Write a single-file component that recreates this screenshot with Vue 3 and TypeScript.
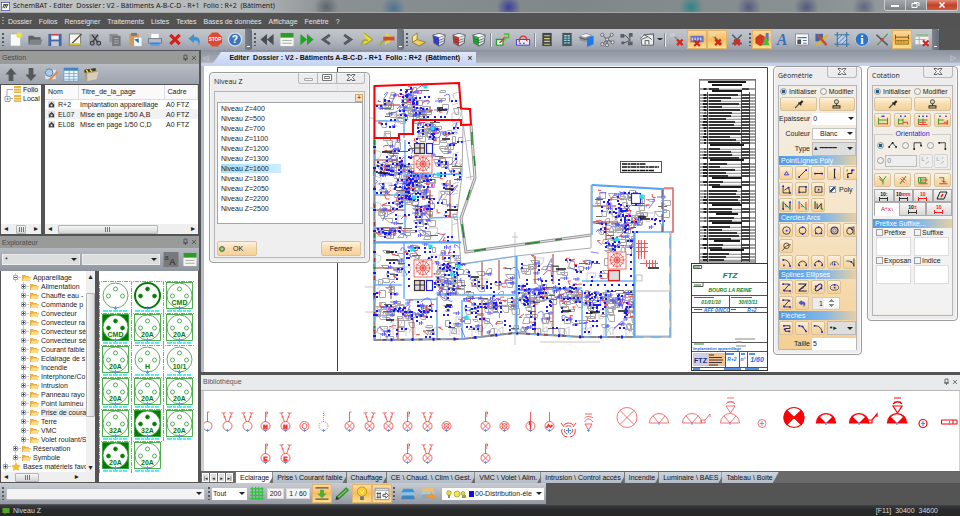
<script setup lang="ts">
import { ref } from 'vue'

type Tool = { icon: string; label: string; on?: boolean }
const P = (d: string, stroke = '#222', w = 1, fill = 'none') =>
  `<path d="${d}" stroke="${stroke}" stroke-width="${w}" fill="${fill}"/>`
const F = (d: string, fill: string) => `<path d="${d}" fill="${fill}"/>`
const C = (x: number, y: number, r: number, fill: string, stroke = 'none', w = 1) =>
  `<circle cx="${x}" cy="${y}" r="${r}" fill="${fill}" stroke="${stroke}" stroke-width="${w}"/>`
const cross = (x: number, y: number, s = 3) =>
  P(`M${x - s} ${y - s}L${x + s} ${y + s}M${x + s} ${y - s}L${x - s} ${y + s}`, '#d8241c', 2.4)
const dots = (pts: number[][], c = '#2020e8') =>
  pts.map(([x, y]) => `<rect x="${x - 1}" y="${y - 1}" width="2.4" height="2.4" fill="${c}"/>`).join('')
const cube = (a: string) =>
  F('M1 3L8 1L15 3L14 12L8 15.500L2 12Z', '#555b66') +
  F('M2 4L8 6V14.500L3 11.500Z', a) + F('M8 6L14 4L13 11.500L8 14.500Z', '#e8eaf2') +
  F('M2 3.500L8 1.800L14 3.500L8 5.500Z', '#f8f8f8') + P('M3 7L8 9L13 7M3 9.500L8 11.500L13 9.500', '#333', 0.7)

const icons: Record<string, string> = {
  app: '<rect x="0.500" y="0.500" width="15" height="15" fill="#fff" stroke="#3a40b8" stroke-width="1.500"/>' + P('M3 11L6 4M6 11L9 4M9 11L12 4M4 5H13', '#222', 1.5),
  neuf: F('M3 2H11L14 5V15H3Z', '#f8f9fa') + P('M3 2H11L14 5V15H3Z', '#a8adb4', 0.8) + C(12.5, 3.5, 3, '#f2e233'),
  ouvrir: F('M1 4H6L7.500 5.500H14V13H1Z', '#5c5f63') + F('M3 8H16L14 13.500H1Z', '#808387'),
  sauver: F('M1 2H15V15H1Z', '#4668a8') + F('M4 2H12V8H4Z', '#eef1f6') + F('M4 10H12V15H4Z', '#c5cad2') + P('M4 3H12', '#b33', 1.5),
  editer: F('M2 2H14V14H2Z', '#f5f5ee') + P('M2 2H14V14H2Z', '#777') + P('M5 12L15 2', '#5a4a3a', 1.4) + P('M2.500 13H14', '#d8c437', 2),
  couper: F('M2 2H12V14H2Z', '#9b9ea3') + P('M5 3L11 11M11 3L6 10', '#3c3d40', 1.5) + C(5, 12, 2, 'none', '#3c3d40', 1.3) + C(12, 12, 2, 'none', '#3c3d40', 1.3),
  copier: F('M2 2H11V11H2Z', '#8e9196') + F('M5 4H14V15H5Z', '#75787d') + P('M7 7H12M7 9.500H12M7 12H12', '#b5b8bc', 0.8),
  coller: F('M2 2H12V15H2Z', '#d09a5c') + F('M4 1H10V4H4Z', '#777') + F('M7 6H15V15H7Z', '#f4f7fb') + F('M7 8L12 12V7Z', '#2a6fc8'),
  imprimer: F('M4 2H12V8H4Z', '#fff') + F('M1 7H15V12H1Z', '#b6bcc6') + F('M3 11H13V15H3Z', '#5a9fe8') + P('M1 7H15V12H1Z', '#5d6775', 0.8),
  suppr: P('M3 3L13 13M13 3L3 13', '#d8201a', 3.4),
  annuler: F('M1 7L7 2V5C12 5 15 8 12 15C12 10 10 9 7 9V12Z', '#3e93cf'),
  stop: F('M5 0.500H11L15.500 5V11L11 15.500H5L0.500 11V5Z', '#e0492c') + '<text x="8" y="10" font-size="5" font-weight="bold" fill="#fff" text-anchor="middle" font-family="Liberation Sans">STOP</text>',
  aide: C(8, 8, 7, '#3f73bb', '#dce6f4', 1.2) + '<text x="8" y="12" font-size="11" font-weight="bold" fill="#fff" text-anchor="middle" font-family="Liberation Sans">?</text>',
  debut: F('M8 2V14L1 8ZM15 2V14L8 8Z', '#4a4d52'),
  liste: F('M1 2H15V15H1Z', '#f4f6f2') + F('M1 1H15V6H1Z', '#2f9a24') + P('M3 9H13M3 12H13', '#a6aaa4'),
  fin: F('M1 2V14L8 8ZM8 2V14L15 8Z', '#1fa51f'),
  prec: P('M11 3L4 8L11 13', '#56595e', 3),
  suiv: P('M5 3L12 8L5 13', '#56595e', 3),
  saut: F('M5 1L14 8L5 14V10L8 8L5 5Z', '#e8da35') + P('M2 14C2 9 5 8 9 9', '#b0a428', 1.6) + P('M5 1L14 8L5 14', '#7c7430', 0.7),
  sautx: F('M7 1L15 7L6 14V10L9 8L7 5Z', '#e8da35') + P('M1 14C1 10 4 9 8 9', '#b0a428', 1.6) + F('M4 5H16V9H4Z', '#cf4a3a'),
  plan: F('M6 1L1 5V11L8 15L15 11L6 7Z', '#f0cf5e') + F('M1 5L6 1V8L1 11Z', '#f8e596') + P('M1 5L6 1V8L1 11ZM6 8L15 11L8 15L1 11', '#7d6a2c', 0.8),
  cubeb: cube('#3a42e0'), cuber: cube('#d63a34'), cubev: cube('#2cb53a'),
  lien: P('M1 8H8V14H1Z', '#2aa12a', 1.4, '#fff') + P('M4 11C7 11 8 8 10 5', '#d33', 1.4) + P('M9 2H14V6H10V9', '#49c02b', 1.6),
  panier: P('M1 8H15V14H1Z', '#3939d8', 1, '#eef') + P('M4 11C3 3 13 2 12 10', '#d33', 1.4) + P('M4 12H6M8 12H10', '#333'),
  armoire: F('M3 1H13V15H3Z', '#44474b') + P('M5 4H11M5 7H11M5 10H11M5 13H11', '#d8d07a', 1.2),
  coffret: F('M3 1H13V15H3Z', '#46565e') + P('M5 4H11M5 6.500H11M5 9H11M5 11.500H11', '#8fe0f0', 1.4, 'none') + P('M8 3V13', '#46565e', 1),
  bloc: F('M0 4L7 1L13 3V9L6 11L0 9Z', '#8f96a2') + F('M1 4L7 2L12 3.500L6 5.500Z', '#f2f4f7') + P('M0 6L6 8L8 7', '#444', 0.8) + F('M8 6L15 4V13L8 16Z', '#1f7be4'),
  noeud: P('M8 8L3 3M8 8L13 3M8 8L3 13M8 8L14 11M8 8V14', '#444', 0.9) + [[3, 3], [13, 3], [3, 13], [14, 11], [8, 8], [8, 14]].map(([x, y]) => C(x, y, 1.7, '#ddd', '#444', 0.7)).join(''),
  reseau: P('M3 4H7L11 9M4 12L11 9M11 3V9', '#444', 0.9) + F('M1 2H5V6H1ZM10 1H14V5H10ZM9 10H14V14H9ZM2 10H5V13H2Z', '#5b5e62'),
  maison: F('M2 4L8 2L15 4V14H1Z', '#eceef0') + P('M1 7L5 3L15 2V14H2V8L9 5L13 8M6 13V9H10V13M5 3L9 5', '#55585c', 1),
  delp: P('M3 3L11 10', '#777', 1.2) + F('M1 1H6V5H1Z', '#c9ccd0') + cross(11, 11),
  deli: F('M1 4H15V11H1Z', '#6474c6') + P('M3 9V6M6 9V6M9 9V6M12 9V6', '#fff') + cross(8, 12),
  dell: P('M3 3L13 13', '#7d7440', 2) + F('M1 1H6V5H1Z', '#ead9a0') + cross(9, 11),
  delr: P('M3 3L13 13M13 3L3 13', '#55585c', 1.6) + cross(8, 11),
  formes: F('M1 6L6 2L11 5V13L6 15L1 12Z', '#cf3a24') + F('M12 1H15V10H12Z', '#4a78d0') + F('M12 4L16 14H8Z', '#58b53c'),
  texte: '<text x="8" y="14" font-size="17" font-weight="bold" font-style="italic" fill="#3d6fb5" text-anchor="middle" font-family="Liberation Serif">A</text>',
  cartouche: F('M1 2H15V14H1Z', '#fafafa') + P('M1 2H15V14H1Z', '#889') + P('M3 6H13M9 9H13M9 12H13', '#4a78b8', 1.2) + F('M3 8H7V13H3Z', '#4b4f55'),
  outils: F('M1 2H9V10H1Z', '#3a62b8') + P('M2 14L14 3', '#e0b528', 2.6) + P('M3 3L13 14', '#d24a28', 2.6),
  hachure: F('M3 3H13V13H3Z', '#b8d0ea') + P('M3 0V16M13 0V16M0 3H16M0 13H16', '#386598') + P('M3 8L8 3M3 13L13 3M8 13L13 8', '#386598', 0.8),
  info: C(8, 8, 7.2, '#2f73c4', '#b9cfe8') + '<text x="8" y="13" font-size="13" font-weight="bold" fill="#fff" text-anchor="middle" font-family="Liberation Serif">i</text>',
  repere: P('M2 3L14 14', '#4e5458', 1.6) + P('M14 2L3 14', '#38a048', 1.2) + C(8, 8, 1.6, '#d33'),
  cote: P('M1 3V8M15 3V8M1 5.500H15', '#6b5218', 1) + F('M1 9H15V13H1Z', '#e2a83a') + P('M1 9H15V13H1ZM4 9V11M7 9V11M10 9V11', '#8c6b20', 0.8),
  delt: F('M1 2H15V13H1Z', '#f2f2f2') + F('M1 2H15V5H1Z', '#9db899') + P('M1 8H12M5 5V13', '#aaa') + cross(12, 12),
  haut: F('M8 1L14 8H10.500V15H5.500V8H2Z', '#55585b'),
  bas: F('M8 15L14 8H10.500V1H5.500V8H2Z', '#55585b'),
  loupe: F('M2 3H13V13H2Z', '#dfe8f2') + C(6, 6, 4, '#a9ccea', '#5a7a9a') + P('M6 14L15 5', '#e08c44', 2.4),
  colonnes: F('M0.500 1H15.500V15H0.500Z', '#f6fafd') + F('M0.500 1H15.500V4H0.500Z', '#3e87c4') + P('M0.500 1H15.500V15H0.500ZM6 4V15M11 4V15M1 7H15M1 10H15M1 13H15', '#4f8fc4', 0.7),
  dossier: F('M1 5L14 3V12L3 15Z', '#a99c80') + F('M1 3L13 1V4L1 6Z', '#3c3a2a') + P('M3 3L5 6M7 2.500L9 5', '#f1d83a', 1.6) + F('M4 7L16 5L14 13L4 15Z', '#d8cfb6'),
  aa: F('M0 0H16V16H0Z', '#77797b') + '<text x="1" y="8" font-size="8" fill="#333" font-family="Liberation Sans">a</text><text x="6" y="14" font-size="10" fill="#222" font-family="Liberation Sans">A</text>',
  grille: P('M3 1V15M6.500 1V15M10 1V15M13.500 1V15M1 3H15M1 6.500H15M1 10H15M1 13.500H15', '#27c637', 1.3),
  hauteur: P('M1 2H15M1 14H15', '#555', 1.4) + F('M6 4H10V8H13L8 13L3 8H6Z', '#4fae2f'),
  crayon: P('M3 13L14 3', '#2f8a2a', 4.4) + P('M4 12L13 4', '#74d057', 1.6) + F('M1 15L2 11L5 14Z', '#333'),
  lampe: C(8, 6, 5, '#f8cf2f', '#b98717', 0.8) + F('M6 11H10V15H6Z', '#70757c') + P('M6 5L8 8L10 4', '#fff3b0'),
  options: F('M0 2H16V15H0Z', '#fafafa') + P('M0.500 2.500H15.500V14.500H0.500ZM0.500 4.500H15.500', '#777', 0.8) + P('M2 8H7M2 12H7M3.500 6.500V13.500M6 6.500V13.500', '#444', 0.9) + P('M9 9H12V7L15 10L12 13V11H9Z', '#444', 0.9),
  calque: F('M3 3H13L15 7H1Z', '#3f95d4') + F('M2 7H14L15.500 10H0.500Z', '#8cc4ea') + F('M2 10H14L15.500 14H0.500Z', '#3c83bf'),
  calquef: F('M3 2H13L15 6H1Z', '#e8c070') + F('M2 6H14L15.500 9H0.500Z', '#a9c9de') + F('M2 9H14L15.500 13H0.500Z', '#7fa9c8') + F('M6 9H11V6L16 11L11 15V12H6Z', '#ef9a2a'),
  bulle: F('M1 2H15V12H8L5 15V12H1Z', '#58a42a'),
  pipette: P('M3 13L9 7', '#555', 1.8) + P('M8 5L12 9', '#222', 2) + P('M10 7L14 3', '#222', 3),
  tampon: C(8, 4, 3, '#ddd5c0', '#333', 1.2) + P('M8 7V10M3 13V10H13V13Z', '#333', 1.6),
  pt: P('M8 5L11 10H5Z', '#22d', 1.2), seg: P('M2 14L14 2', '#222', 1.2) + dots([[3, 13], [13, 3]]),
  hor: P('M2 8H14', '#222', 1.5) + dots([[3, 8], [13, 8]]), ver: P('M8 2V14', '#222', 1.5) + dots([[8, 2], [8, 14]]),
  brk: P('M4 14V8H10V3H14', '#222', 1.4) + dots([[4, 13], [10, 3]]) + P('M3 5V2'),
  zig: P('M3 3V13H13L11 5L5 9', '#222', 1.2) + dots([[3, 3], [13, 13], [11, 5]]),
  rec: P('M3 4H13V12H3Z', '#222', 1.2) + dots([[3, 12], [13, 4]]),
  rcc: P('M3 4H13V12H3Z', '#222', 1.2) + dots([[8, 8]]),
  pa: P('M3 3V13M13 3V13M5 5L11 11', '#222', 1.4) + dots([[3, 3], [7, 9], [13, 13]], '#10b8d8') + dots([[3, 13], [13, 3]]),
  pb: P('M3 3V13M13 3V13M5 5L11 11', '#d33', 1.4) + dots([[3, 3], [7, 9], [13, 13]], '#10b8d8'),
  pc: P('M3 3V13M6 5V13L12 5V13', '#222', 1.3) + dots([[3, 3], [13, 13]], '#28a828'),
  ce: C(8, 8, 5.5, 'none', '#222', 1.1) + dots([[8, 8]]), c2: C(8, 8, 5, 'none', '#222', 1.1) + dots([[8, 3], [8, 13]]),
  c3: C(8, 8, 5, 'none', '#222', 1.1) + dots([[8, 3], [4, 12], [12, 12]]), c4: C(8, 8, 5, 'none', '#446', 1.8) + C(8, 8, 2.5, 'none', '#33c'),
  ct: C(7, 9, 4.5, 'none', '#222', 1.1) + P('M13 2V14M4 4L13 3') + dots([[10, 6]]), cs: C(8, 7, 4, 'none', '#222', 1.1) + P('M2 14L8 7L14 5'),
  a1: P('M3 4C9 4 12 7 13 13', '#222', 1.2) + dots([[3, 4], [13, 13], [4, 12]]), a2: P('M2 12C3 4 13 4 14 12', '#222', 1.2) + dots([[3, 12], [13, 12]]),
  a3: P('M2 12C3 4 13 4 14 12', '#222', 1.2) + dots([[3, 12], [13, 12], [8, 6]]), a4: P('M2 12C3 5 13 5 14 12M8 6V12M5 7V12', '#446', 1) + dots([[8, 11]]),
  a5: P('M2 6C8 5 12 8 13 13M13 2V14', '#222', 1.2) + dots([[9, 7]]),
  s1: P('M3 3H12L4 13H13', '#222', 1.2) + dots([[3, 3], [12, 4], [4, 12], [13, 13]]), s2: P('M2 3H14M13 4L3 12M2 13H14', '#222', 1.5) + dots([[8, 8]]),
  s3: '<ellipse cx="8" cy="8" rx="6" ry="3" transform="rotate(-45 8 8)" fill="none" stroke="#226" stroke-width="1.500"/>' + dots([[4, 6], [12, 9]]),
  s4: '<ellipse cx="8" cy="8" rx="6" ry="4" fill="none" stroke="#222"/>' + dots([[8, 8], [8, 4]]),
  und: F('M2 7L7 3V5C13 5 14 9 9 14C11 10 9 9 7 9V11Z', '#4a58c8'),
  f1: P('M4 4H13V8H6V12H12', '#222', 1.3) + dots([[4, 4], [12, 12], [5, 9]]), f2: P('M3 4L8 5L13 12', '#222', 1.3) + dots([[3, 4], [8, 5], [13, 12]]), f3: P('M2 4C9 4 12 7 13 13', '#222', 1.3) + dots([[2, 4], [13, 13]]),
  d1: P('M2 5V14M14 5V14M2 8H14', '#2b9a2b', 1.2) + P('M2 13H14', '#e33', 1.2) + P('M6 3H10', '#33d', 1.8),
  d2: P('M2 6V14M8 6V14M2 8H8', '#2b9a2b', 1.2) + P('M8 11H14V14M2 13H8', '#e33', 1.2) + P('M4 3H6M10 3H12', '#33d', 2),
  d3: P('M2 6V14M2 8H14M8 6V14', '#2b9a2b', 1.2) + P('M2 11H12M2 14H14', '#e33', 1.2) + P('M2 3H4M7 3H9M12 3H14', '#33d', 2),
  d4: P('M2 6V14M14 8V14M2 8H9', '#2b9a2b', 1.2) + P('M9 11H14M2 13H14', '#e33', 1.2) + P('M3 3H5M11 3H13', '#33d', 2),
  o1: P('M3 10L8 4L13 10', '#222', 1.2) + dots([[3, 10], [8, 4], [13, 10]], '#111'), o2: P('M3 13V4H13V8', '#222', 1.2) + dots([[3, 13], [13, 8]], '#111'), o3: P('M3 4H12V13', '#222', 1.2) + dots([[3, 4], [12, 13]], '#111'),
  g1: P('M3 3L8 9L12 3M8 9V14', '#2b9a2b', 1.3) + P('M3 6L8 11', '#e33', 1.3), g2: P('M4 13L12 3', '#2b9a2b', 1.4) + P('M5 6L10 12M7 4L12 9', '#e33', 1.2),
  g3: P('M2 5H12V11H2ZM5 5V11', '#2b9a2b', 1.3) + P('M5 8H14M2 13H14', '#e33', 1.3), g4: P('M3 5H9V12', '#2b9a2b', 1.3) + P('M3 13H14M6 9L12 11', '#e33', 1.3),
  dis: P('M3 3V8H6M8 13L13 9M9 5L12 4', '#b5b5b5', 1.4),
}

const group = (pairs: string[][]): Tool[] => pairs.map(([icon, label]) => ({ icon, label }))
const bars: { lead: string; tools: Tool[]; end?: string }[] = [
  { lead: 'grip', end: 'more', tools: group([['neuf', 'Nouveau'], ['ouvrir', 'Ouvrir'], ['sauver', 'Enregistrer'], ['editer', 'Editer'], ['couper', 'Couper'], ['copier', 'Copier'], ['coller', 'Coller'], ['imprimer', 'Imprimer'], ['suppr', 'Supprimer'], ['annuler', 'Annuler'], ['stop', 'Stop'], ['aide', 'Aide']]) },
  { lead: 'grip', end: 'more', tools: group([['debut', 'Début'], ['liste', 'Liste'], ['fin', 'Fin'], ['prec', 'Précédent'], ['suiv', 'Suivant'], ['saut', 'Sauter'], ['sautx', 'Sauter la ligne']]) },
  { lead: 'grip', tools: group([['plan', 'Plan'], ['cubeb', 'Bloc bleu'], ['cuber', 'Bloc rouge'], ['cubev', 'Bloc vert']]) },
  { lead: 'sep', tools: group([['lien', 'Lien'], ['panier', 'Panier']]) },
  { lead: 'sep', end: 'drop', tools: group([['armoire', 'Armoire'], ['coffret', 'Coffret'], ['bloc', 'Bloc'], ['noeud', 'Noeud'], ['reseau', 'Réseau'], ['maison', 'Bâtiment']]) },
  { lead: 'sep', tools: [{ icon: 'delp', label: 'Supprimer point' }, { icon: 'deli', label: 'Supprimer info', on: true }, { icon: 'dell', label: 'Supprimer lien', on: true }, { icon: 'delr', label: 'Supprimer réseau' }] },
  { lead: 'grip', end: 'more', tools: [{ icon: 'formes', label: 'Formes', on: true }, { icon: 'texte', label: 'Texte' }, { icon: 'cartouche', label: 'Cartouche' }, { icon: 'outils', label: 'Outils' }, { icon: 'hachure', label: 'Hachure' }, { icon: 'info', label: 'Information' }, { icon: 'repere', label: 'Repère' }, { icon: 'cote', label: 'Cotation', on: true }, { icon: 'delt', label: 'Supprimer tableau' }] },
]
const menus = ['Dossier', 'Folios', 'Renseigner', 'Traitements', 'Listes', 'Textes', 'Bases de données', 'Affichage', 'Fenêtre', '?']
const title = 'Editer  Dossier : V2 - Bâtiments A-B-C-D - R+1  Folio : R+2  (Bâtiment)'
const folios = [['R+2', 'Implantation appareillage'], ['EL07', 'Mise en page 1/50 A,B'], ['EL08', 'Mise en page 1/50 C,D']]
const tree: { t: string; lv: number; open?: boolean; sel?: boolean; star?: boolean }[] = [
  { t: 'Appareillage', lv: 1, open: true },
  ...['Alimentation', 'Chauffe eau -', 'Commande p', 'Convecteur', 'Convecteur ra', 'Convecteur sé', 'Convecteur sé', 'Courant faible', 'Eclairage de s', 'Incendie', 'Interphone/Co', 'Intrusion', 'Panneau rayo', 'Point lumineu', 'Prise de coura', 'Terre', 'VMC', 'Volet roulant/S'].map((t) => ({ t, lv: 2, sel: t === 'Prise de coura' })),
  { t: 'Réservation', lv: 1 }, { t: 'Symbole', lv: 1 }, { t: 'Bases matériels favo', lv: 0, star: true },
]
const sockets: { t: string; box?: boolean; full?: boolean; bold?: boolean }[] = [
  { t: '' }, { t: '', bold: true }, { t: 'CMD', box: true },
  { t: 'CMD', full: true }, { t: '20A', box: true }, { t: '20A', box: true },
  { t: '20A', box: true }, { t: 'H' }, { t: '10/1' },
  { t: '20A', box: true }, { t: '20A', box: true }, { t: '20A', box: true },
  { t: '32A', box: true }, { t: '32A', full: true }, { t: '20A', box: true },
  { t: '20A', full: true }, { t: '20A', box: true },
]
const levels = [400, 500, 700, 1100, 1200, 1300, 1600, 1800, 2050, 2200, 2500]
const level = ref(1600)
const folder = ref('Eclairage')
const shelves = ['Eclairage', 'Prise \\ Courant faible', 'Chauffage', 'CE \\ Chaud. \\ Clim \\ Gest.', 'VMC \\ Volet \\ Alim.', 'Intrusion \\ Control accés', 'Incendie', 'Luminaire \\ BAES', 'Tableau \\ Boite']

const geo = [
  { t: 'PointLignes Poly', rows: [['pt', 'seg', 'hor', 'ver', 'brk'], ['zig', 'rec', 'rcc', '@poly'], ['pa', 'pb', 'pc']] },
  { t: 'Cercles Arcs', rows: [['ce', 'c2', 'c3', 'c4', 'ct'], ['cs'], ['a1', 'a2', 'a3', 'a4', 'a5']] },
  { t: 'Splines Ellipses', rows: [['s1', 's2', 's3', 's4'], ['s1', 'und', '@num']] },
  { t: 'Flèches', rows: [['f1', 'f2', 'f3', '@arrow']] },
]

/* Floor plan: deterministic fill of the rooms with fixtures and furniture */
let seed = 71
const rnd = () => ((seed = (seed * 16807) % 2147483647) / 2147483647)
const r1 = (n: number) => Math.round(n * 10) / 10
const rooms: [number, number, number, number, number][] = [
  [376, 90, 23, 44, 0.5], [399, 87, 26, 30, 2], [430, 90, 28, 28, 0.2], [414, 122, 22, 18, 2.2], [438, 124, 23, 50, 0.5],
  [376, 140, 28, 26, 0.6], [376, 162, 28, 14, 2.2], [376, 180, 20, 16, 0.5], [393, 178, 14, 24, 2], [376, 200, 28, 24, 0.5], [403, 142, 8, 60, 1.2], [432, 155, 12, 20, 1],
  [408, 172, 24, 16, 2.2], [412, 190, 18, 34, 1.8], [436, 178, 24, 36, 0.4], [376, 226, 28, 8, 2.4], [408, 226, 40, 12, 0.3],
  [376, 246, 26, 50, 0.4], [406, 244, 52, 14, 0.8], [434, 262, 28, 32, 1.8], [376, 301, 56, 16, 1.9], [376, 320, 58, 16, 0.4],
  [439, 302, 22, 32, 0.3], [462, 297, 50, 12, 1.9], [464, 268, 50, 24, 0.5], [464, 312, 50, 20, 0.4],
  [518, 258, 62, 22, 0.5], [518, 284, 60, 18, 2.3], [518, 305, 62, 24, 0.5],
  [594, 190, 24, 32, 0.7], [618, 189, 22, 36, 1.6], [644, 193, 18, 34, 0.3], [594, 222, 40, 10, 1.4], [600, 234, 34, 14, 1.2], [583, 250, 22, 28, 0.3],
  [583, 290, 50, 18, 2.2], [583, 308, 50, 26, 0.4],
]
let dotPath = '', greyPath = '', redPath = '', arcPath = '', inkPath = '', roundPath = '', magPath = '', doorPath = ''
for (const [x, y, w, h, k] of rooms) {
  const n = w * h * k
  const at = () => [Math.round(x + rnd() * w), Math.round(y + rnd() * h)]
  for (let i = 0; i < 1 + n / 95; i++) { const [a, b] = at(); dotPath += `M${a} ${b}h2v2h-2zm${rnd() > 0.5 ? '4 0' : '0 4'}h2v2h-2z` }
  for (let i = 0; i < n / 150; i++) { const [a, b] = at(); roundPath += `M${a} ${b}h${r1(3 + rnd() * 6)}m-4 -1v3m2 -4v4` }
  for (let i = 0; i < 1 + n / 55; i++) { const [a, b] = at(); greyPath += `M${a + 0.5} ${b + 0.5}h${Math.round(3 + rnd() * 6)}v${Math.round(2 + rnd() * 5)}h-${Math.round(3 + rnd() * 4)}z` }
  for (let i = 0; i < 1 + n / 220; i++) { const [a, b] = at(); redPath += `M${a} ${b}l${r1(rnd() * 10 - 5)} ${r1(rnd() * 10 - 5)}h3` }
  for (let i = 0; i < 1 + n / 500; i++) { const [a, b] = at(); arcPath += `M${a} ${b}q${r1(rnd() * 16 - 4)} ${r1(rnd() * 16 - 12)} ${r1(rnd() * 24 - 12)} ${r1(rnd() * 10)}` }
  for (let i = 0; i < n / 420; i++) { const [a, b] = at(); inkPath += `M${a} ${b + 0.5}h${Math.round(5 + rnd() * 5)}` }
  if (k < 1) { const [a, b] = at(); doorPath += `M${a} ${b}h9a9 9 0 0 1-9 9z` }
  if (k > 1.5) { const [a, b] = at(); magPath += `M${a} ${b}h2.4v3h-2.4z` }
}
for (let y = 150; y < 335; y += 26) doorPath += `M375 ${y}l6 2a7 7 0 0 1-4 7`
for (let x = 384; x < 630; x += 22) doorPath += `M${x} 336v-8a8 8 0 0 1 7 7m2 0v-8a8 8 0 0 0-6 6`
for (let y = 92; y < 215; y += 30) doorPath += `M459 ${y}l-6 2a7 7 0 0 0 5 7m0 2l-6 2`
const outline = 'M374 86L459 83L461 108L470 109L471 125L463 126L462 175L457 215L461 264L516 256L591 248V185L663 189H673V232H670V337H582L515 333L462 339L374 340Z'
const walls = 'M374 121H399M374 195H405M405 140V235M374 242H461M408 175L463 174M429 218L457 217M374 285H402M404 242V299M405 300L437 299M437 297V339M437 295H515M462 300V338M461 222V262M462 264L516 256M592 185L663 189M592 185V235M634 232H671M634 232V337M582 290V337M606 290V337M582 281H634M517 290L582 288M404 106V138'
const brown = 'M374 105H400M374 160H398M374 210H405M374 228H402M374 268H400M391 285V299M398 318V339M413 318V339M482 262V290M499 260V290M482 300V336M535 256V284M553 254V284M535 303V334M553 303V334M592 206H616M592 222H618M450 180V216M430 190V218M606 222V240'
const cyans = [[425, 86], [432, 128], [438, 174], [414, 197], [412, 249], [430, 246], [458, 266], [452, 274], [466, 317], [641, 196], [616, 239]]
const stairs = [[423, 164], [423, 268], [617, 260]]
const spokes = (x: number, y: number) => Array.from({ length: 12 }, (_, i) => {
  const a = (i * Math.PI) / 6
  return `M${x} ${y}L${r1(x + 8 * Math.cos(a))} ${r1(y + 8 * Math.sin(a))}`
}).join('')

const heads = [81, 84, 90, 144, 159, 177, 186, 204, 213, 222, 240, 249]
const legend = Array.from({ length: 60 }, (_, i) => {
  const y = 81 + i * 3
  return { y, head: heads.includes(y), w: Math.round(10 + rnd() * 22), s: Math.round(1 + rnd() * 4) }
})

/* Library sheet symbols: [x, y, stem, mark] */
const lamps: [number, number, string, string][] = [
  [207, 426, 'i', ''], [227, 426, 'v', ''], [247, 426, 'v', ''], [265, 426, 'f', 'N'], [285, 426, 'v', 'N'], [304, 426, '', 'o'], [323, 426, 'd', ''],
  [349, 426, 'i', 'x'], [369, 426, 'v', 'x'], [388, 426, 'v', 'x'], [407, 426, 'f', 'x'], [427, 426, 'v', 'x'], [446, 426, '', 'ox'],
  [485, 426, 'f', 'x'], [504, 426, '', 'ox'], [530, 426, 'l', 't'], [549, 426, 'l', 'm'],
  [265, 458, 'f', 'E'], [285, 458, 'v', 'E'], [407, 458, 'f', 'x'], [427, 458, 'v', 'x'], [485, 458, 'f', 'x'],
]
const stems: Record<string, string> = {
  '': '', i: 'M0-4V-14H2', d: 'M0-4V-14H2M0-11H2', f: 'M0-4V-14H2V-12H0M0-10H2', l: 'M0-4V-14', v: 'M-1-4L-4-12L-2-14M-6-13H-3M1-4L4-12L2-14M3-13H6M-4-9H-2M4-9H2',
}
</script>

<template>
  <div class="app">
    <header class="titlebar">
      <svg class="logo" viewBox="0 0 16 16" v-html="icons.app" />
      <h1>SchemBAT - {{ title }}</h1>
      <div class="winbtns">
        <button aria-label="Réduire"><svg viewBox="0 0 10 6"><path d="M1 4H9" stroke="#fff" stroke-width="2" /></svg></button>
        <button aria-label="Restaurer"><svg viewBox="0 0 10 6"><path d="M1 1.500H6V5.500H1ZM3 0.500H8V4" fill="none" stroke="#fff" /></svg></button>
        <button class="close" aria-label="Quitter"><svg viewBox="0 0 10 6"><path d="M2.500 0.500L7.500 5.500M7.500 0.500L2.500 5.500" stroke="#fff" stroke-width="1.500" /></svg></button>
      </div>
    </header>

    <nav class="menubar"><i class="grip light" /><a v-for="m in menus" :key="m" href="#">{{ m }}</a></nav>

    <div class="toolrow">
      <div class="tools">
        <template v-for="(b, i) in bars" :key="i">
          <i class="lead" :class="{ thin: b.lead === 'sep' }"><i :class="b.lead" /></i>
          <button v-for="t in b.tools" :key="t.label" class="tool" :class="{ on: t.on }" :aria-label="t.label"><svg viewBox="0 0 16 16" v-html="icons[t.icon]" /></button>
          <i v-if="b.end" :class="b.end" />
        </template>
      </div>
    </div>

    <main>
      <aside>
        <div class="panelhead"><span>Gestion</span><svg viewBox="0 0 14 8"><path d="M2 1H5V5H2ZM1 5H6M3.500 5V7M10 2L14 6M14 2L10 6" fill="none" stroke="#444" stroke-width="0.700" /></svg></div>
        <div class="paneltools">
          <button v-for="t in ['haut', 'bas', 'loupe', 'colonnes', 'dossier']" :key="t" class="tool" :aria-label="t"><svg viewBox="0 0 16 16" v-html="icons[t]" /></button>
        </div>
        <div class="split gest">
          <div class="pane roots">
            <ul>
              <li><svg viewBox="0 0 20 9"><path d="M6 9V4.500H12" stroke="#aaa" fill="none" /><path d="M13 1H20V8H13Z" fill="#e9b546" /><path d="M13 3.500H20M13 6H20" stroke="#fbe6ae" /></svg><b>Folio</b></li>
              <li><svg viewBox="0 0 20 9"><path d="M6 0V3M9 4.500H12" stroke="#aaa" fill="none" /><path d="M4 2.500H9V7.500H4ZM5 5H8M6.500 3.500V6.500" fill="#fff" stroke="#789" stroke-width="0.700" /><path d="M13 1H20V8H13Z" fill="#e9b546" /><path d="M13 3.500H20M13 6H20" stroke="#fbe6ae" /></svg><b>Local</b></li>
            </ul>
            <div class="hscroll"><span>◂</span><i class="short" /><span>▸</span></div>
          </div>
          <div class="pane files">
            <table>
              <thead><tr><th>Nom</th><th>Titre_de_la_page</th><th>Cadre</th></tr></thead>
              <tbody>
                <tr v-for="f in folios" :key="f[0]">
                  <td><svg viewBox="0 0 8 8"><rect width="8" height="8" fill="#dcdcdc" /><path d="M1 4L4 1L7 4V7H1Z" fill="#3a3d40" /><path d="M3 4H5V6H3Z" fill="#eee" /></svg>{{ f[0] }}</td>
                  <td>{{ f[1] }}</td><td>A0 FTZ</td>
                </tr>
              </tbody>
            </table>
            <div class="hscroll"><span>◂</span><i class="long" /><span>▸</span></div>
          </div>
        </div>
        <div class="panelhead second"><span>Explorateur</span><svg viewBox="0 0 14 8"><path d="M2 1H5V5H2ZM1 5H6M3.500 5V7M10 2L14 6M14 2L10 6" fill="none" stroke="#444" stroke-width="0.700" /></svg></div>
        <div class="filters">
          <select aria-label="Filtre"><option>*</option></select>
          <select aria-label="Sous-filtre"><option></option></select>
          <button class="tool" aria-label="Casse"><svg viewBox="0 0 16 16" v-html="icons.aa" /></button>
          <button class="tool" aria-label="Liste"><svg viewBox="0 0 16 16" v-html="icons.liste" /></button>
        </div>
        <div class="split expl">
          <div class="pane explorer">
            <div class="treebox">
              <ul class="tree">
                <li v-for="(n, i) in tree" :key="i" :class="'lv' + n.lv">
                  <svg viewBox="0 0 18 9">
                    <path d="M2.500 -1V10M5 4.500H8" stroke="#ccc" fill="none" />
                    <path d="M0.500 2.500H4.500V6.500H0.500Z" fill="#fff" stroke="#8a9aac" stroke-width="0.800" />
                    <path :d="n.open ? 'M1 4.500H4' : 'M1 4.500H4M2.500 3V6'" stroke="#335" stroke-width="0.800" />
                    <path v-if="n.star" d="M13 0L14.500 3L18 3.500L15.500 6L16 9L13 7.500L10 9L10.500 6L8 3.500L11.500 3Z" fill="#f2bd35" />
                    <path v-else d="M9 2H12L13 3H16V4H18L16.500 8H9Z" fill="#eeb044" />
                    <path v-if="!n.star" d="M11 4.500H18L16.500 8H9.500Z" fill="#fcdc8a" />
                  </svg><span :class="{ sel: n.sel }">{{ n.t }}</span>
                </li>
              </ul>
              <div class="vscroll"><span>▴</span><i /><span>▾</span></div>
            </div>
            <div class="hscroll"><span>◂</span><i class="mid" /><span>▸</span><em /></div>
          </div>
          <div class="pane symbols">
            <svg v-for="(s, i) in sockets" :key="i" class="socket" viewBox="0 0 32 32">
              <path d="M0.500 32V0.500H32" fill="none" stroke="#ff4cff" stroke-dasharray="4 1 1 1" />
              <rect v-if="s.box || s.full" x="3.500" y="1.500" width="26" height="26" :fill="s.full ? '#067a06' : 'none'" stroke="#2a9a2a" stroke-width="0.800" />
              <circle cx="16.500" cy="14.500" r="12.500" fill="#fff" :stroke="s.bold ? '#067a06' : '#2f9c2f'" :stroke-width="s.bold ? 2 : 0.800" />
              <circle v-for="(p, j) in [[16.5, 8], [9.5, 15], [23.5, 15]]" :key="j" :cx="p[0]" :cy="p[1]" r="2" :fill="s.full || s.bold ? '#067a06' : 'none'" stroke="#188818" stroke-width="0.700" />
              <text v-if="s.t" x="16.500" y="24" text-anchor="middle">{{ s.t }}</text>
              <path d="M4 30H28" stroke="#1ce8f4" stroke-width="1.500" stroke-dasharray="5 1 3 1" />
              <path d="M16.500 25V29M15 27.500H18" stroke="#3a8af0" stroke-width="0.800" />
            </svg>
          </div>
        </div>
      </aside>

      <section class="work">
        <div class="tabbar"><span>◁</span><div class="doctab"><span>{{ title }}</span><button aria-label="Fermer l'onglet">×</button></div><span>▷</span></div>

        <div class="stage">
          <svg class="drawing" viewBox="204 66 756 306" preserveAspectRatio="xMinYMin meet">
            <defs><clipPath id="shell"><path :d="outline" /></clipPath></defs>
            <path d="M337.500 371V67.500H767.500V371" fill="none" stroke="#444" />
            <path d="M365 118H374M365 208H374M365 287H374M365 312H380M515 232V345M512 237H518M540 342H600" stroke="#c6c6c6" fill="none" />
            <g fill="none">
              <path d="M471 125L475 178L461 218L466 252L525 244L591 235" stroke="#999" stroke-width="3" />
              <path d="M471 125L475 178L461 218L466 252L525 244L591 235" stroke="#e8e8e8" stroke-width="1" />
              <path d="M472 132V145M474 156L475 166M470 190L467 200M462 224L464 238M474 251L486 249M525 244L540 242M555 240L562 239" stroke="#1f8a26" stroke-width="1.500" />
              <path d="M461 108L471 180M452 218V242M462 142L471 140M466 178L474 176" stroke="#bbb" />
              <path :d="outline" stroke="#aaa" />
            </g>
            <g clip-path="url(#shell)" fill="none">
              <path :d="doorPath" stroke="#c0c0c0" stroke-width="0.800" />
              <path :d="greyPath" stroke="#a8a8a8" />
              <path :d="brown" stroke="#9c3a34" stroke-width="1" />
              <path :d="walls" stroke="#6cb2f6" stroke-width="1.500" />
              <path :d="redPath" stroke="#f03a3a" stroke-width="0.900" />
              <path :d="arcPath" stroke="#5a5af4" stroke-width="0.800" />
              <path :d="inkPath" stroke="#666" />
              <path :d="roundPath" stroke="#4a4af0" stroke-width="0.800" />
              <path :d="magPath" fill="#f23cf2" />
              <path :d="dotPath" fill="#1c1cf0" />
              <rect x="635" y="233" width="35" height="103" fill="#fff" />
              <path d="M635 291H670M640 240V256M636 275H642V281H636Z" stroke="#bbb" />
            </g>
            <g fill="none">
              <path d="M374.500 138V340L462 339L515 333L582 337H634" stroke="#8a8a8a" stroke-width="2" />
              <path d="M634 336.500H670.500V233" stroke="#b4b4b4" stroke-width="2" />
              <path d="M374.500 140V340" stroke="#1f8a26" stroke-width="2" stroke-dasharray="5 26" />
              <path d="M375 148V340L462 339L515 333L582 337H670V233" stroke="#6cb2f6" stroke-width="1.500" stroke-dasharray="11 7" />
              <path d="M374.500 150V340L462 339L515 333L582 337H634" stroke="#a0342e" stroke-width="1.500" stroke-dasharray="4 14" />
              <path d="M374.500 146V340L462 339L515 333L582 337H634" stroke="#1212f0" stroke-width="3" stroke-dasharray="2 19" />
              <path d="M516.500 256V333M634.500 233V337M374 242.500H461" stroke="#57a6f4" stroke-width="2" />
              <path d="M592 185L663 189V232" stroke="#57a6f4" stroke-width="2" />
              <path d="M662 190V232" stroke="#a0342e" stroke-dasharray="7 5" />
              <path d="M664 188H673V232H671" stroke="#f06a6a" stroke-width="1.500" />
              <path d="M638.500 240V259M641.500 240V259M644.500 240V259M636 243.500H648M636 247.500H648M636 251.500H648M640 263.500H658M646.500 260V267M649.500 260V267M652.500 260V267M655.500 260V267" stroke="#f25a5a" />
            </g>
            <g v-for="s in stairs" :key="s.join()" fill="none" stroke="#e84a44" stroke-width="0.800">
              <rect :x="s[0] - 9" :y="s[1] - 8" width="18" height="17" fill="#fff" />
              <circle :cx="s[0]" :cy="s[1]" r="3" /><circle :cx="s[0]" :cy="s[1]" r="6.500" />
              <path :d="spokes(s[0], s[1])" />
            </g>
            <g fill="#ddd" stroke="#433" stroke-width="1.200">
              <rect x="414.500" y="143.500" width="10" height="10" /><rect x="414.500" y="280.500" width="10" height="10" />
              <path d="M415 148H424M420 144V153M415 285H424M420 281V290" />
              <rect x="426.500" y="143.500" width="6" height="10" fill="#fff" stroke="#2222e0" /><rect x="426.500" y="280.500" width="6" height="10" fill="#fff" stroke="#2222e0" />
              <rect x="608.500" y="270.500" width="11" height="10" stroke="#d42020" /><rect x="631.500" y="193.500" width="9" height="10" fill="#fff" stroke="#2222e0" />
            </g>
            <rect v-for="c in cyans" :key="c.join()" :x="c[0] - 1.5" :y="c[1] - 1.5" width="4" height="4" fill="#17e4ee" />
            <path d="M409 142V200M409 250V292M583 285H634M631 240V280" stroke="#1212f0" stroke-width="2" stroke-dasharray="2 5" fill="none" />
            <path d="M437 108H443M438 110H447M442 139H450M382 152H392M378 173H388M386 252H394M386 260H398M445 189H454M447 210H458M386 320H394M446 305H452M471 277H479M556 269H566M562 311H571M590 312H600M618 311H626M638 217H646M640 219H650M648 268H659" stroke="#111" stroke-width="1.500" />
            <path d="M374.500 86L459 83L461 108.500L470 109L471 124.500L461 125V120H413V134H399V138H374.500Z" fill="none" stroke="#fb0007" stroke-width="2" />

            <rect x="620.500" y="161.500" width="41" height="11" fill="#fff" stroke="#555" />
            <path d="M622 164H646M622 167H659M622 170.500H654" stroke="#111" stroke-width="1.400" stroke-dasharray="5 0.500 3 0.500" />

            <rect x="699.500" y="79.500" width="56" height="184" fill="#a2a2a2" stroke="#777" />
            <g v-for="l in legend" :key="l.y">
              <rect x="700" :y="l.y" width="55" height="1" fill="#fff" />
              <rect v-if="l.head" x="700" :y="l.y" width="55" height="3" fill="#fff" />
              <rect v-if="l.head" :x="706 + l.s * 2" :y="l.y" :width="42 - l.s * 4" height="2" fill="#1a1a1a" />
              <template v-else>
                <rect x="709" :y="l.y + 1" :width="l.w" height="2" fill="#333" />
                <rect :x="705 - l.s / 2" :y="l.y + 1" :width="l.s" height="2" fill="#222" />
                <rect x="742" :y="l.y + 1" width="7" height="2" fill="#444" />
                <rect :x="709 + l.w" :y="l.y + 1" :width="33 - l.w" height="1" fill="#e2e2e2" />
              </template>
            </g>
            <path d="M707.500 92V262M741.500 92V262M749.500 92V262" stroke="#222" stroke-width="0.800" />

            <rect x="691.500" y="263.500" width="76" height="107" fill="#fff" stroke="#333" />
            <path d="M692 282.500H767M692 295.500H767M692 307.500H767M692 312.500H767M729.500 295V312M692 342.500H767M692 351.500H767M725.500 351V368M739.500 351V368M747.500 351V368M692 367.500H767M693.500 265.500H701.500V268.500H693.500ZM693.500 282.500H703V286.500H693.500" fill="none" stroke="#555" />
            <path d="M694 267H700M694 285H701M694 297.500H714M731 297.500H752M694 344H704M694 309.500H702M731 309.500H736" stroke="#1f8a26" stroke-width="1.200" />
            <g class="cart">
              <text x="730" y="278" font-size="8" fill="#15801a" text-anchor="middle">FTZ</text>
              <text x="730" y="292" font-size="5" fill="#15801a" text-anchor="middle">BOURG LA REINE</text>
              <text x="711" y="304" font-size="5" fill="#15801a" text-anchor="middle">01/01/10</text>
              <text x="748" y="304" font-size="5" fill="#15801a" text-anchor="middle">30/03/11</text>
              <text x="717" y="312" font-size="5" fill="#1b6fe0" text-anchor="middle">AFF 0/NCO</text>
              <text x="752" y="312" font-size="5" fill="#1b6fe0" text-anchor="middle">R+2</text>
              <text x="693" y="350" font-size="4" fill="#1b6fe0">Implantation appareillage</text>
              <text x="732" y="361" font-size="5" fill="#1b6fe0" text-anchor="middle">R+2</text>
              <text x="743" y="361" font-size="5" fill="#1b6fe0" text-anchor="middle">n°</text>
              <text x="757" y="362" font-size="7" fill="#1b6fe0" text-anchor="middle">1/60</text>
            </g>
            <path d="M735 339H755M736 342H742M736 346H746" stroke="#888" />
            <path d="M726 354H734M741 354H745M749 354H755M693 369H700M724 369H741M745 369H759" stroke="#1b6fe0" stroke-width="1.500" />
            <rect x="693" y="353" width="32" height="13" fill="#f0c493" />
            <rect x="694" y="354" width="13" height="11" fill="#cfd0e4" /><text class="ftz" x="700.500" y="363" text-anchor="middle">FTZ</text>
            <path d="M709 355H714M709 357.500H722M709 360H723M709 362.500H722M709 365H718" stroke="#433" />
          </svg>

          <section class="win niveau">
            <div class="cap"><h2>Niveau Z</h2><div class="capbtns three">
              <button aria-label="Réduire"><svg viewBox="0 0 12 10"><path d="M2.500 5.500H10.500V7.500H2.500Z" fill="#fff" stroke="#aaa" /></svg></button>
              <button aria-label="Agrandir"><svg viewBox="0 0 12 10"><path d="M1.500 1.500H10.500V7.500H1.500ZM3.500 3.500H8.500V5.500H3.500Z" fill="#fff" stroke="#777" /></svg></button>
              <button aria-label="Fermer la fenêtre"><svg viewBox="0 0 12 10"><path d="M2 1.500H5L6 3L7 1.500H10L7.500 4.500L10 7.500H7L6 6L5 7.500H2L4.500 4.500Z" fill="#fff" stroke="#666" /></svg></button>
            </div></div>
            <div class="client">
              <button class="plus" aria-label="Ajouter">+</button>
              <ul class="levels"><li v-for="l in levels" :key="l"><button :class="{ sel: l === level }" @click="level = l">Niveau Z={{ l }}</button></li></ul>
              <div class="acts"><button class="gold"><i class="led" />OK</button><button class="gold">Fermer</button></div>
            </div>
          </section>

          <section class="win geo">
            <div class="cap"><h2>Géométrie</h2><div class="capbtns"><button aria-label="Fermer Géométrie"><svg viewBox="0 0 12 10"><path d="M2 1.500H5L6 3L7 1.500H10L7.500 4.500L10 7.500H7L6 6L5 7.500H2L4.500 4.500Z" fill="#fff" stroke="#666" /></svg></button></div></div>
            <div class="client warm">
              <div class="radios"><label><input type="radio" name="gm" checked />Initialiser</label><label><input type="radio" name="gm" />Modifier</label></div>
              <div class="duo"><button class="gold" aria-label="Pipette"><svg viewBox="0 0 16 16" v-html="icons.pipette" /></button><button class="gold" aria-label="Tampon"><svg viewBox="0 0 16 16" v-html="icons.tampon" /></button></div>
              <label class="field">Epaisseur<select><option>0</option></select></label>
              <label class="field">Couleur<select class="boxed mid"><option>Blanc</option></select></label>
              <label class="field">Type<select class="boxed grey"><option>▴ ━━━━</option></select></label>
              <template v-for="g in geo" :key="g.t">
                <h3>{{ g.t }}</h3>
                <div v-for="(r, i) in g.rows" :key="i" class="iconrow">
                  <template v-for="(ic, j) in r" :key="j">
                    <label v-if="ic === '@poly'" class="poly"><input type="checkbox" checked />Poly</label>
                    <input v-else-if="ic === '@num'" class="num" type="number" value="1" aria-label="Nombre" />
                    <select v-else-if="ic === '@arrow'" class="boxed grey arrow" aria-label="Flèche"><option>•▸</option></select>
                    <button v-else class="gold sq" :aria-label="g.t + ' ' + (i * 5 + j + 1)"><svg viewBox="0 0 16 16" v-html="icons[ic]" /></button>
                  </template>
                </div>
              </template>
              <label class="field">Taille<input type="text" value="5" /></label>
            </div>
          </section>

          <section class="win cota">
            <div class="cap"><h2>Cotation</h2><div class="capbtns"><button aria-label="Fermer Cotation"><svg viewBox="0 0 12 10"><path d="M2 1.500H5L6 3L7 1.500H10L7.500 4.500L10 7.500H7L6 6L5 7.500H2L4.500 4.500Z" fill="#fff" stroke="#666" /></svg></button></div></div>
            <div class="client cot">
              <div class="radios"><label><input type="radio" name="cm" checked />Initialiser</label><label><input type="radio" name="cm" />Modifier</label></div>
              <div class="duo"><button class="gold" aria-label="Pipette"><svg viewBox="0 0 16 16" v-html="icons.pipette" /></button><button class="gold" aria-label="Tampon"><svg viewBox="0 0 16 16" v-html="icons.tampon" /></button></div>
              <div class="quad"><button v-for="d in ['d1', 'd2', 'd3', 'd4']" :key="d" class="gold" :aria-label="'Cote ' + d"><svg viewBox="0 0 16 16" v-html="icons[d]" /></button></div>
              <fieldset>
                <legend>Orientation</legend>
                <div><label v-for="(o, i) in ['o1', 'o2', 'o3']" :key="o"><input type="radio" name="or" :checked="i === 0" :aria-label="'Orientation ' + (i + 1)" /><svg viewBox="0 0 16 16" v-html="icons[o]" /></label></div>
                <div><input type="radio" name="or" aria-label="Angle libre" /><input class="ang" type="text" value="0" aria-label="Angle" /><button disabled aria-label="Angle 1"><svg viewBox="0 0 16 16" v-html="icons.dis" /></button><button disabled aria-label="Angle 2"><svg viewBox="0 0 16 16" v-html="icons.dis" /></button></div>
              </fieldset>
              <div class="quad"><button v-for="d in ['g1', 'g2', 'g3', 'g4']" :key="d" class="gold" :aria-label="'Cote ' + d"><svg viewBox="0 0 16 16" v-html="icons[d]" /></button></div>
              <div class="ctabs"><button><u>10:</u><i class="h" /></button><button><u>10<s>mm</s></u><i class="h" /></button><button><s>10</s><i class="h red" /></button><button aria-label="Plan incliné"><svg viewBox="0 0 12 10"><path d="M4 1H11L8 8H1Z" fill="none" stroke="#222" /><path d="M5 6L7 3" stroke="#e22" stroke-width="1.500" /></svg></button></div>
              <div class="ctabs low"><button class="cur"><s>Aᵃx₁</s></button><button><u>10<s>±</s></u><i class="h" /></button><button><s>10</s><i class="h red" /></button></div>
              <div class="sheet">
                <h3>Préfixe Suffixe...</h3>
                <div class="fixes"><div v-for="f in ['Préfixe', 'Suffixe', 'Exposan', 'Indice']" :key="f"><label><input type="checkbox" /><span>{{ f }}</span></label><input type="text" :aria-label="f + ' texte'" /></div></div>
              </div>
            </div>
          </section>
        </div>

        <div class="libhead"><span>Bibliothèque</span><svg viewBox="0 0 14 8"><path d="M2 1H5V5H2ZM1 5H6M3.500 5V7M10 2L14 6M14 2L10 6" fill="none" stroke="#444" stroke-width="0.700" /></svg></div>
        <div class="lib">
          <svg viewBox="204 391 752 80" preserveAspectRatio="xMinYMin meet">
            <g v-for="(l, i) in lamps" :key="i" :transform="`translate(${l[0] + 0.5} ${l[1]})`" fill="none" stroke="#f23c3c" stroke-width="0.800">
              <circle r="4.500" :stroke-dasharray="l[2] === 'd' ? '1 1' : 'none'" />
              <path :d="stems[l[2]]" :stroke-dasharray="l[2] === 'd' ? '1 1' : 'none'" />
              <path v-if="l[3].includes('x')" d="M-3-3L3 3M3-3L-3 3" />
              <circle v-if="l[3].includes('o')" r="2.500" />
              <path v-if="l[3] === 't'" d="M-1-4.500V-1M0-4V3" stroke-width="1.500" />
              <path v-if="l[3] === 'm'" d="M-3 2L-1-1L1 1L3-1" stroke-width="1.800" />
              <text v-if="['N', 'E'].includes(l[3])" y="2.500" text-anchor="middle">{{ l[3] }}</text>
              <path d="M0 3V6M-1.500 4.500H1.500" stroke="#4a8cf0" />
            </g>
            <g fill="none" stroke="#f23c3c">
              <path d="M564 425A6 6 0 0 1 573 425M565.500 427A4 4 0 0 1 571.500 427M562 429A6 6 0 0 0 567 437M564.500 429A4 4 0 0 0 567.500 434M575 429A6 6 0 0 1 570 437M572.500 429A4 4 0 0 1 569.500 434M561 423L564 427M576 423L573 427" />
              <path d="M568.500 428V433M566 430.500H571" stroke="#4a8cf0" />
              <path d="M585 414H592M584.500 418C587 416 590 416 593 418M584.500 422C587 418 590 418 593 422M585 424L588.500 430L592 424Z" stroke-width="0.800" />
              <path d="M588.500 429V432M587 430.500H590" stroke="#4a8cf0" stroke-width="0.800" />
            </g>
            <g v-for="(dx, k) in [0, 167]" :key="k" :transform="`translate(${dx} 0)`" :stroke="k ? '#fb0007' : '#f25050'" :stroke-width="k ? 1.2 : 0.8" :fill="k ? '#fb0007' : 'none'">
              <circle cx="627" cy="417.500" r="10" fill="none" />
              <path v-if="k" d="M627 417.500L620 410.500A10 10 0 0 0 620 424.500ZM627 417.500L634 410.500A10 10 0 0 1 634 424.500Z" />
              <path v-else d="M620 410.500L634 424.500M634 410.500L620 424.500" />
              <g v-for="(x, j) in [659, 692, 730]" :key="j">
                <path :d="`M${x - 9.5} 423A9.500 9.500 0 0 1 ${x + 9.5} 423Z`" />
                <path v-if="k" :d="`M${x - 6} 417A8 8 0 0 1 ${x + 6} 417L${x} 423Z`" fill="#fff" stroke="none" />
                <path v-else :d="`M${x - 6} 416L${x} 423L${x + 6} 416`" />
                <path :d="`M${x} 422V425`" stroke="#4a8cf0" />
              </g>
              <path d="M701 423V420H705V423ZM705 420L710 414V417" fill="none" />
              <path d="M726 406H735L730.500 413ZM727 402H734M727 398H734M726 404C729 401 732 401 735 404" fill="none" />
              <circle :cx="k ? 756 : 762" cy="423.500" r="4" fill="none" />
              <path :d="`M${k ? 756 : 762} 421V426M${k ? 754 : 760} 423.500H${k ? 758 : 764}`" stroke="#4a8cf0" />
            </g>
            <path d="M941.500 420H957V424H941.500ZM953 420V424" fill="none" stroke="#fb0007" />
            <path d="M949.500 421V425" stroke="#4a8cf0" />
          </svg>
        </div>
        <div class="shelf">
          <div class="navs"><button aria-label="Premier">|◂</button><button aria-label="Avant">◂</button><button aria-label="Après">▸</button><button aria-label="Dernier">▸|</button></div>
          <button v-for="s in shelves" :key="s" class="stab" :class="{ cur: s === folder }" @click="folder = s">{{ s }}</button>
        </div>
      </section>
    </main>

    <footer class="bottom">
      <div class="bleft"><i class="grip" /><select aria-label="Commande"><option></option></select></div>
      <div class="bright">
        <i class="grip" />
        <select class="tout" aria-label="Affichage"><option>Tout</option></select>
        <button class="tool" aria-label="Grille"><svg viewBox="0 0 16 16" v-html="icons.grille" /></button>
        <input class="pas" type="text" value="200" aria-label="Pas" /><input class="ech" type="text" value="1 / 60" aria-label="Echelle" />
        <button class="tool on" aria-label="Hauteur"><svg viewBox="0 0 16 16" v-html="icons.hauteur" /></button>
        <button class="tool" aria-label="Crayon"><svg viewBox="0 0 16 16" v-html="icons.crayon" /></button>
        <button class="tool on" aria-label="Lampe"><svg viewBox="0 0 16 16" v-html="icons.lampe" /></button>
        <button class="tool on" aria-label="Options"><svg viewBox="0 0 16 16" v-html="icons.options" /></button>
        <i class="grip mids" />
        <button class="tool" aria-label="Calques"><svg viewBox="0 0 16 16" v-html="icons.calque" /></button>
        <button class="tool" aria-label="Calque suivant"><svg viewBox="0 0 16 16" v-html="icons.calquef" /></button>
        <div class="layer">
          <svg viewBox="0 0 28 8"><circle cx="3" cy="3" r="2.400" fill="#e9d93a" stroke="#8a8220" stroke-width="0.500" /><path d="M2 5H4V8H2Z" fill="#888" /><circle cx="11" cy="4" r="3" fill="#f2e84a" stroke="#8a8220" stroke-width="0.600" /><circle cx="17" cy="3.500" r="2" fill="#d7dd6a" stroke="#7a8220" stroke-width="0.600" /><path d="M16 5H20V8H16Z" fill="#9aa83a" /><rect x="23" y="1" width="5" height="6" fill="#0a12e8" /></svg>
          <select aria-label="Calque actif"><option>00-Distribution-éle</option></select>
        </div>
      </div>
    </footer>
    <div class="status"><svg viewBox="0 0 16 16" v-html="icons.bulle" /><span>Niveau Z</span><i /><span class="pos">[F11]&nbsp; 30400&nbsp; 34600</span></div>
  </div>
</template>

<style>
html, body { margin: 0; height: 100%; overflow: hidden; }
</style>

<style scoped>
* { box-sizing: border-box; }
.app { height: 100vh; display: flex; flex-direction: column; background: #545454; font: 7px/9px "Liberation Sans", sans-serif; color: #222; overflow: hidden; }
button, input, select { font: inherit; color: inherit; margin: 0; padding: 0; border: 0; background: none; border-radius: 0; min-width: 0; }
select { appearance: none; background: #fff url("data:image/svg+xml,%3Csvg xmlns='http://www.w3.org/2000/svg' width='9' height='5'%3E%3Cpath d='M1 1H7L4 4Z' fill='%23222'/%3E%3C/svg%3E") no-repeat right center; }
ul { list-style: none; margin: 0; padding: 0; }
h1, h2, h3 { margin: 0; font: inherit; }
svg { display: block; flex: none; }
.titlebar { flex: none; height: 13px; display: flex; align-items: center; background: radial-gradient(circle at 53% 60%, #3c3f9a 0, transparent 12px), radial-gradient(circle at 34% 60%, #5c646c 0, transparent 12px), radial-gradient(circle at 41% 70%, #4d7390 0, transparent 12px), radial-gradient(circle at 72% 60%, #2f8486 0, transparent 12px), radial-gradient(circle at 78% 60%, #585a7c 0, transparent 12px), radial-gradient(circle at 84% 60%, #53597c 0, transparent 12px), radial-gradient(circle at 90% 60%, #63667e 0, transparent 12px), linear-gradient(90deg, #c4c6c6 0, #b4b7b7 26%, #8b9193 34%, #7f8789 60%, #899193 85%, #9da3a5); border-bottom: 1px solid #a4a8a9; padding-left: 1px; }
.logo { width: 9px; height: 9px; }
.titlebar h1 { flex: 1; margin-left: 3px; font: 7px/12px "Noto Sans", sans-serif; white-space: pre; color: #181818; }
.winbtns { display: flex; align-self: flex-start; margin-right: 2px; border: 1px solid #c9cdd0; border-top: 0; border-radius: 0 0 3px 3px; overflow: hidden; }
.winbtns button { width: 21px; height: 10px; border-right: 1px solid #c9cdd0; background: linear-gradient(#a4a9ab, #7c8284); }
.winbtns button.close { width: 30px; border: 0; background: linear-gradient(#df8a75, #c2402a 50%, #d2583a); }
.winbtns svg { width: 10px; height: 6px; margin: auto; }
.menubar { flex: none; height: 16px; display: flex; align-items: center; gap: 7px; background: #535353; }
.menubar a { color: #e6e6e6; text-decoration: none; }
.menubar .grip { margin: 0 -3px 0 2px; }
.grip { width: 2px; height: 13px; flex: none; background: repeating-linear-gradient(#565a62 0 2px, transparent 2px 4px); }
.grip.light { height: 9px; background: repeating-linear-gradient(#999 0 1px, transparent 1px 3px); }
.toolrow { flex: none; height: 21px; display: flex; background: #545454; }
.tools { display: flex; align-items: center; background: linear-gradient(#c3c6cc, #b3b8c0 50%, #989ea9); border-radius: 0 0 3px 0; }
.lead { width: 5px; display: flex; justify-content: center; }
.lead.thin { width: 4px; }
.sep { width: 2px; height: 14px; background: #e4e6ea; border-left: 1px solid #858b95; }
.more { width: 7px; height: 21px; background: linear-gradient(90deg, #7c828d, #676d78); border-radius: 0 2px 2px 0; display: flex; }
.more::after { content: ""; width: 3px; height: 1px; background: #fff; margin: 17px 0 0 2px; }
.drop { width: 6px; border: 2px solid transparent; border-top-color: #333; height: 3px; }
.tool { width: 20px; height: 19px; flex: none; display: flex; align-items: center; justify-content: center; border: 1px solid transparent; }
.tool svg { width: 16px; height: 15px; }
.tool.on { background: linear-gradient(#fcd9a0, #f9bb5c 50%, #fde08f); border-color: #dfb46c; }
main { flex: 1; min-height: 0; display: flex; }
aside { width: 199px; flex: none; display: flex; flex-direction: column; padding-bottom: 1px; }
.panelhead { flex: none; height: 13px; display: flex; align-items: center; justify-content: space-between; padding: 0 3px 0 2px; background: #999a9a; color: #4a4a4a; margin-top: 1px; }
.panelhead.second { height: 12px; margin-top: 2px; }
.panelhead svg, .libhead svg { width: 14px; height: 8px; }
.paneltools { flex: none; height: 20px; display: flex; align-items: center; padding-left: 1px; background: linear-gradient(#b9bdc4, #9da3ad); }
.split { display: flex; gap: 4px; padding: 0 1px; background: #545454; min-height: 0; }
.gest { flex: none; height: 150px; padding-top: 1px; }
.expl { flex: 1; }
.pane { background: #fff; display: flex; flex-direction: column; justify-content: space-between; overflow: hidden; }
.roots { width: 40px; flex: none; }
.roots li { display: flex; height: 9px; gap: 2px; white-space: nowrap; }
.roots svg { width: 20px; height: 9px; }
.roots b { font-weight: normal; }
.roots li:first-child b { background: #eee; }
.files { flex: 1; }
.files table { border-collapse: collapse; table-layout: fixed; width: 100%; }
.files th { height: 14px; font-weight: normal; text-align: left; padding: 0 3px; border-right: 1px solid #ddd; border-bottom: 1px solid #ddd; background: #fafafa; }
.files th:first-child { width: 33px; } .files th:nth-child(2) { width: 86px; }
.files td { height: 10px; padding: 0 2px; white-space: nowrap; }
.files tr:nth-child(2) td { background: #f2f2f2; }
.files td svg { display: inline-block; width: 7px; height: 7px; margin: 0 3px 0 1px; vertical-align: -1px; }
.hscroll { flex: none; height: 10px; display: flex; align-items: center; justify-content: space-between; padding: 0 3px; background: #efefef; font: 8px/8px "DejaVu Sans", sans-serif; }
.hscroll i, .vscroll i { display: block; border: 1px solid #b4b4b4; border-radius: 1px; background: linear-gradient(#f6f6f6, #d2d4d6); }
.hscroll i { height: 9px; background-image: repeating-linear-gradient(90deg, #777 0 1px, transparent 1px 2px), linear-gradient(#f6f6f6, #d2d4d6); background-size: 5px 5px, 100% 100%; background-repeat: no-repeat; background-position: center; }
.hscroll .short { width: 10px; } .hscroll .long { width: 100px; margin-right: 28px; } .hscroll .mid { width: 24px; margin-right: 28px; } .hscroll em { width: 6px; }
.filters { flex: none; height: 23px; display: flex; align-items: center; gap: 2px; padding: 0 1px 0 2px; background: linear-gradient(#b6bac1, #8f959f); }
.filters select { width: 78px; height: 11px; padding-left: 2px; background-color: #dcdddd; border: 1px solid #ececec; }
.filters .tool { width: 16px; margin-left: 1px; }
.explorer { width: 94px; flex: none; }
.treebox { flex: 1; min-height: 0; display: flex; overflow: hidden; }
.tree { flex: 1; min-width: 0; overflow: hidden; padding-top: 2px; }
.tree li { height: 9px; display: flex; gap: 2px; white-space: nowrap; }
.tree svg { width: 18px; height: 9px; }
.lv0 { padding-left: 2px; } .lv1 { padding-left: 12px; } .lv2 { padding-left: 20px; }
.tree .sel { background: #ececec; }
.vscroll { width: 9px; flex: none; display: flex; flex-direction: column; align-items: center; background: #f0f0f0; font: 8px/8px "DejaVu Sans", sans-serif; padding-top: 2px; }
.vscroll i { width: 9px; height: 124px; flex: 0 1 auto; margin: 12px 0 auto; background: linear-gradient(90deg, #f6f6f6, #d6d8da); }
.symbols { flex: 1; flex-direction: row; flex-wrap: wrap; justify-content: flex-start; align-content: flex-start; padding-top: 10px; }
.socket { width: 32px; height: 32px; }
.socket text { font: bold 7px "Liberation Sans", sans-serif; fill: #067a06; }
.work { flex: 1; min-width: 0; display: flex; flex-direction: column; margin-left: 2px; }
.tabbar { flex: none; height: 16px; display: flex; align-items: center; background: linear-gradient(#8d939e, #a9aeb8 75%, #c6d2ea 85%, #c6d2ea); font-family: "DejaVu Sans", sans-serif; color: #dde0e6; padding: 0 4px 0 2px; }
.doctab { display: flex; align-items: center; gap: 7px; height: 14px; margin: 1px auto 0 3px; padding: 0 4px 2px 18px; background: linear-gradient(#dfe8fa, #c2d2f2); clip-path: polygon(10px 0, 100% 0, 100% 100%, 0 100%); color: #111; font: bold 7px/12px "Liberation Sans", sans-serif; white-space: pre; }
.doctab button { font-weight: normal; font-size: 9px; }
.stage { flex: 1; min-height: 0; position: relative; background: #fff; border-left: 3px solid #b3bccd; overflow: hidden; }
.drawing { width: 100%; height: 100%; }
.cart text { font-family: "Liberation Sans", sans-serif; font-style: italic; font-weight: bold; }
.ftz { font: bold 7px "Liberation Sans", sans-serif; fill: #1a2a80; }
.win { position: absolute; background: rgba(236, 236, 238, 0.94); border: 1px solid #9c9c9c; border-radius: 4px; box-shadow: inset 0 0 0 1px #f8f8f8; padding: 0 4px 4px; display: flex; flex-direction: column; }
.cap { flex: none; height: 18px; display: flex; justify-content: space-between; }
.cap h2 { font: 7px/18px "Open Sans", sans-serif; }
.capbtns { display: flex; height: 11px; border: 1px solid #b9b9b9; border-top: 0; border-radius: 0 0 3px 3px; }
.capbtns button { width: 28px; display: flex; align-items: center; justify-content: center; }
.capbtns svg { width: 12px; height: 10px; }
.three button { width: 19px; border-right: 1px solid #b9b9b9; }
.three button:last-child { width: 27px; border: 0; }
.client { flex: 1; min-height: 0; border: 1px solid #b5b5b5; background: #efefef; display: flex; flex-direction: column; }
.gold { background: linear-gradient(#fdf2de, #f8dcae 50%, #f6d29a); border: 1px solid #d8c29c; border-radius: 2px; display: flex; align-items: center; justify-content: center; }
.gold svg { width: 11px; height: 11px; }
.niveau { left: 5px; top: 6px; width: 161px; height: 191px; }
.niveau .client { padding: 2px 1px 1px 2px; }
.plus { align-self: flex-end; width: 8px; height: 8px; line-height: 6px; border: 1px solid #c9a878; background: #fbe1b8; }
.levels { height: 122px; background: #fff; border: 1px solid #a2a6ae; padding: 1px 3px; margin-bottom: auto; }
.levels li { height: 10px; }
.levels button { display: block; width: 60px; height: 9px; text-align: left; }
.levels .sel { background: linear-gradient(90deg, #a5ddf8, #cdeefc); }
.acts { display: flex; justify-content: space-between; padding-right: 2px; }
.acts .gold { width: 40px; height: 15px; gap: 8px; }
.led { width: 6px; height: 6px; margin-left: -12px; border-radius: 3px; background: radial-gradient(#b8f08a, #2c9a1c); border: 1px solid #667; }
.geo { right: 98px; top: 0; width: 89px; height: 289px; }
.warm { background: linear-gradient(#f3efe8, #f6e5c8 50%, #f5cf93); }
.radios { flex: none; height: 11px; display: flex; gap: 3px; padding-left: 1px; }
.radios label { display: flex; align-items: center; gap: 2px; }
input[type="radio"] { appearance: none; flex: none; width: 7px; height: 7px; border-radius: 4px; border: 1px solid #9a9a9a; background: #f2f2f2; }
input[type="radio"]:checked { background: radial-gradient(#1d5c86 40%, #c8e0ee 50%); }
input[type="checkbox"] { appearance: none; flex: none; width: 7px; height: 7px; border: 1px solid #9ea2a8; background: #f4f4f4; }
input[type="checkbox"]:checked { background: #fff linear-gradient(135deg, transparent 35%, #34508c 36% 64%, transparent 65%); }
.duo { flex: none; display: flex; gap: 2px; height: 14px; padding: 0 1px; }
.duo .gold { flex: 1; }
.field { flex: none; height: 15px; display: flex; align-items: center; justify-content: flex-end; gap: 2px; }
.field select, .field > input { width: 44px; height: 12px; background-color: #fff; padding-left: 1px; }
.field .mid { padding-left: 7px; }
.boxed.mid { border: 1px solid #c5c5c5; }
.field .grey, .arrow { background-color: #dedede; border: 1px solid #bbb; font-family: "DejaVu Sans", sans-serif; }
.field .grey { height: 14px; }
h3 { flex: none; height: 9px; line-height: 9px; padding-left: 2px; color: #f6fbff; background: linear-gradient(90deg, #4a9ae8, #86b8e4 60%, #e8cfa2); }
.iconrow { flex: none; height: 16px; display: flex; align-items: center; gap: 2px; }
.sq { width: 14px; height: 14px; flex: none; }
.poly { display: flex; align-items: center; gap: 3px; margin-left: 2px; }
.num { width: 28px; height: 13px; margin-left: 1px; padding-left: 6px; background: #ececec; border: 1px solid #ccc; }
.num::-webkit-inner-spin-button { opacity: 1; width: 8px; height: 10px; }
.arrow { width: 30px; height: 14px; padding-left: 1px; }
.cota { right: 2px; top: 0; width: 91px; height: 255px; }
.cot { background: #f2eee6; padding-bottom: 2px; }
.quad { flex: none; display: grid; grid-template-columns: repeat(4, 1fr); gap: 3px; padding: 2px 1px 0; }
.quad .gold { height: 14px; }
.quad .gold svg { width: 14px; height: 12px; }
fieldset { flex: none; min-width: 0; margin: 3px 1px 1px; padding: 0 2px 2px; border: 1px solid #ccc; height: 40px; }
legend { margin: 0 auto; padding: 0 2px; color: #2626d8; line-height: 8px; }
fieldset div { display: flex; align-items: center; justify-content: space-between; height: 15px; }
fieldset label { display: flex; align-items: center; gap: 3px; }
fieldset svg { width: 11px; height: 11px; }
.ang { width: 32px; height: 12px; background: #eee; border: 1px solid #bcbcbc; padding-left: 1px; color: #888; }
fieldset button { width: 14px; height: 14px; background: #eee; border: 1px solid #d4d4d4; border-radius: 2px; }
.ctabs { flex: none; display: flex; height: 13px; margin-top: 2px; padding-left: 1px; }
.ctabs.low { margin-top: 0; height: 14px; }
.ctabs button { flex: 1; display: flex; flex-direction: column; align-items: center; border: 1px solid #aaa; background: linear-gradient(#f6f6f6, #d8d8d8); font: bold 5px/6px "Liberation Sans", sans-serif; color: #111; justify-content: center; }
.ctabs .cur { background: #fff; border-bottom-color: #fff; border-right: 0; font: 6px/6px "DejaVu Sans", sans-serif; }
.ctabs u { text-decoration: none; } .ctabs s { text-decoration: none; color: #e22; }
.ctabs .h { width: 9px; height: 4px; border: 1px solid #333; border-width: 0 1px; background: linear-gradient(#333, #333) center / 100% 1px no-repeat; }
.ctabs .red { border-color: #e22; background: linear-gradient(#e22, #e22) center / 100% 1px no-repeat; }
.ctabs svg { width: 12px; height: 10px; }
.sheet { flex: 1; background: #f2f2f2; padding: 3px 3px; }
.sheet h3 { margin: 0 -3px; }
.fixes { display: grid; grid-template-columns: 1fr 1fr; gap: 0 3px; }
.fixes label { display: flex; align-items: center; gap: 1px; height: 9px; white-space: nowrap; }
.fixes > div > input { display: block; width: 100%; height: 19px; background: #fff; border: 1px solid #dcdcdc; }
.fixes > div { min-width: 0; }
.libhead { flex: none; height: 16px; margin-top: 3px; display: flex; align-items: center; justify-content: space-between; padding: 0 3px 2px 2px; background: #e9eaec; color: #555; border-bottom: 1px solid #b5b5b5; }
.lib { flex: none; height: 80px; background: #fff; border: 0 solid #d0d0d0; border-width: 0 1px 0 3px; }
.lib svg { width: 100%; height: 100%; }
.lib text { font: bold 6px "Liberation Sans", sans-serif; fill: #f00; }
.shelf { flex: none; height: 12px; display: flex; background: #6a6a6a; border-top: 1px solid #666; }
.navs { display: flex; gap: 1px; padding: 1px 2px 1px 1px; width: 34px; }
.navs button { flex: 1; background: #ddd; font: 5px/8px "DejaVu Sans", sans-serif; border: 1px solid #fff; }
.stab { height: 11px; padding: 0 6px 0 4px; margin-right: -3px; white-space: nowrap; background: linear-gradient(#cfd5dd, #b3bbc6); clip-path: polygon(0 0, 100% 0, calc(100% - 6px) 100%, 0 100%); border-left: 1px solid #777; color: #111; }
.stab.cur { background: #fff; }
.bottom { flex: none; height: 22px; display: flex; background: #545454; }
.bleft, .bright { display: flex; align-items: center; background: linear-gradient(#c9ccd2, #9298a3); padding: 0 2px; gap: 2px; height: 21px; }
.bleft { width: 207px; }
.bleft select { flex: 1; height: 12px; background-color: #f4f4f4; border: 1px solid #b8bcc4; }
.bright { gap: 0; padding: 0 2px 0 1px; }
.bright .grip { margin-right: 2px; }
.bright .mids { margin: 0 3px 0 1px; }
.tout { width: 35px; height: 12px; padding-left: 1px; }
.pas, .ech { height: 11px; background: #f4f4f4; border: 1px solid #d6d8dc; margin-right: 2px; text-align: center; }
.pas { width: 17px; } .ech { width: 24px; }
.layer { display: flex; align-items: center; height: 12px; margin-left: 4px; padding-left: 4px; background: #fff; }
.layer svg { width: 28px; height: 8px; }
.layer select { width: 70px; height: 12px; padding-left: 1px; }
.status { flex: none; height: 11px; display: flex; align-items: center; gap: 3px; padding: 0 22px 0 2px; background: linear-gradient(#3c3f4a, #2a2a2a 40%, #262626); color: #d8d8d8; }
.status svg { width: 8px; height: 8px; }
.status i { flex: 1; }
</style>
